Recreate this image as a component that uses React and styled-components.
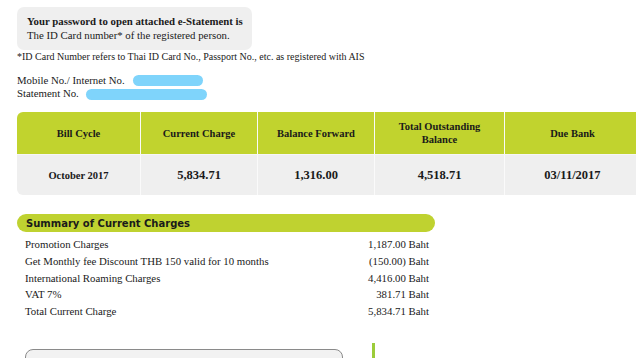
import React from "react";
import styled, { createGlobalStyle } from "styled-components";

const Global = createGlobalStyle`
  html, body { margin: 0; padding: 0; background: #fff; overflow: hidden; }
  body { font-family: "Liberation Serif", "Times New Roman", serif; color: #1a1a1a; }
`;

const Page = styled.div`
  width: 636px;
  height: 358px;
  overflow: hidden;
  padding: 7px 0 0 17px;
  box-sizing: border-box;
`;

const PasswordBox = styled.div`
  width: 235px;
  height: 43px;
  box-sizing: border-box;
  background: #efefef;
  border-radius: 7px;
  padding: 8px 0 0 10px;
  font-size: 10.8px;
  line-height: 13.5px;
`;

const Bold = styled.div`
  font-weight: bold;
`;

const Footnote = styled.div`
  margin-top: 1px;
  font-size: 10px;
  line-height: 12px;
`;

const Info = styled.div`
  margin-top: 11px;
  font-size: 10.8px;
  line-height: 13px;
`;

const InfoRow = styled.div`
  display: flex;
  align-items: center;
`;

const Label = styled.span`
  width: ${(p) => p.$w}px;
  flex: none;
  white-space: nowrap;
`;

const Scribble = styled.span`
  display: inline-block;
  width: ${(p) => p.$w}px;
  height: 11px;
  border-radius: 6px;
  background: #7fd4fb;
  margin-top: ${(p) => p.$mt || 0}px;
`;

const Table = styled.div`
  margin-top: 12px;
  width: 623px;
  border-radius: 6px 0 0 6px;
  overflow: hidden;
  display: grid;
  grid-template-columns: 123px 117px 117px 130px 136px;
  grid-template-rows: 42px 41px;
  background: #fff;
`;

const Cell = styled.div`
  display: flex;
  align-items: center;
  justify-content: center;
  text-align: center;
  white-space: pre-line;
  font-weight: bold;
  background: ${(p) => (p.$head ? "#c1d32e" : "#efefef")};
  border-left: ${(p) => (p.$first ? "none" : "1px solid #fafafa")};
  font-size: ${(p) => (p.$big ? "12.5px" : "10.5px")};
  line-height: 13px;
  color: #1a1a1a;
  ${(p) => !p.$head && "border-top: 1px solid #f6f6f6;"}
`;

const Summary = styled.div`
  margin-top: 19px;
  width: 418px;
`;

const Pill = styled.div`
  height: 18px;
  background: #bfd230;
  border-radius: 9px;
  display: flex;
  align-items: center;
  padding-left: 9px;
  font-family: "DejaVu Sans", Verdana, sans-serif;
  font-weight: bold;
  font-size: 10px;
  color: #1a1a1a;
`;

const Rows = styled.div`
  margin-top: 4px;
  padding: 0 6px 0 8px;
`;

const Row = styled.div`
  display: flex;
  justify-content: space-between;
  font-size: 10.8px;
  line-height: 16.75px;
`;

const Bottom = styled.div`
  margin-top: 23px;
  display: flex;
  align-items: flex-start;
`;

const OutlineBox = styled.div`
  margin-top: 6px;
  margin-left: 8px;
  width: 318px;
  height: 30px;
  box-sizing: border-box;
  border: 1px solid #8a8a8a;
  border-radius: 8px;
  background: #f2f2f2;
`;

const GreenBar = styled.div`
  margin-left: 29px;
  width: 3px;
  height: 30px;
  background: #9ccc3a;
`;

const heads = ["Bill Cycle", "Current Charge", "Balance Forward", "Total Outstanding\nBalance", "Due Bank"];
const vals = ["October 2017", "5,834.71", "1,316.00", "4,518.71", "03/11/2017"];
const charges = [
  ["Promotion Charges", "1,187.00 Baht"],
  ["Get Monthly fee Discount THB 150 valid for 10 months", "(150.00) Baht"],
  ["International Roaming Charges", "4,416.00 Baht"],
  ["VAT 7%", "381.71 Baht"],
  ["Total Current Charge", "5,834.71 Baht"],
];

export default function App() {
  return (
    <Page>
      <Global />
      <PasswordBox>
        <Bold>Your password to open attached e-Statement is</Bold>
        <div>The ID Card number* of the registered person.</div>
      </PasswordBox>
      <Footnote>*ID Card Number refers to Thai ID Card No., Passport No., etc. as registered with AIS</Footnote>
      <Info>
        <InfoRow>
          <Label $w={116}>Mobile No./ Internet No.</Label>
          <Scribble $w={70} />
        </InfoRow>
        <InfoRow>
          <Label $w={69}>Statement No.</Label>
          <Scribble $w={121} $mt={2} />
        </InfoRow>
      </Info>
      <Table>
        {heads.map((h, i) => (
          <Cell key={h} $head $first={i === 0}>
            {h}
          </Cell>
        ))}
        {vals.map((v, i) => (
          <Cell key={v} $first={i === 0} $big={i > 0}>
            {v}
          </Cell>
        ))}
      </Table>
      <Summary>
        <Pill>Summary of Current Charges</Pill>
        <Rows>
          {charges.map(([a, b]) => (
            <Row key={a}>
              <span>{a}</span>
              <span>{b}</span>
            </Row>
          ))}
        </Rows>
      </Summary>
      <Bottom>
        <OutlineBox />
        <GreenBar />
      </Bottom>
    </Page>
  );
}
